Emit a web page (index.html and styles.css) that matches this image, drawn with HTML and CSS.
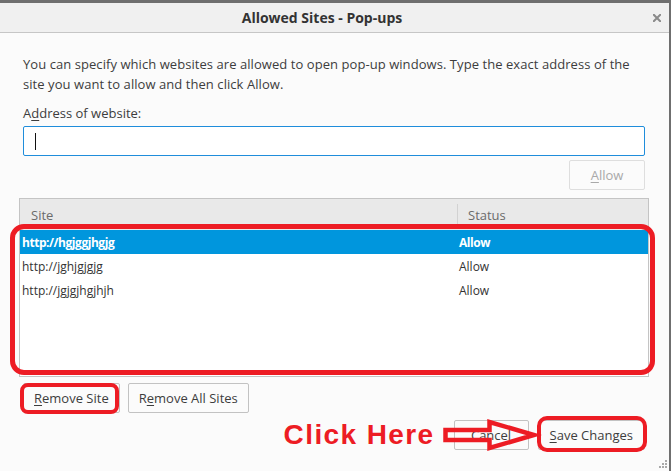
FILE: index.html
```html
<!DOCTYPE html>
<html lang="en">
<head>
<meta charset="utf-8">
<title>Allowed Sites - Pop-ups</title>
<link rel="stylesheet" href="styles.css">
</head>
<body>
<div class="window">
  <div class="titlebar">
    <div class="title">Allowed Sites - Pop-ups</div>
    <svg class="close" width="8" height="8" viewBox="0 0 8 8"><path d="M0.8 0.8 L7.2 7.2 M7.2 0.8 L0.8 7.2" stroke="#8a8a8a" stroke-width="2" stroke-linecap="square"/></svg>
  </div>
  <div class="content">
    <p class="intro">You can specify which websites are allowed to open pop-up windows. Type the exact address of the<br>site you want to allow and then click Allow.</p>
    <label class="label">A<u>d</u>dress of website:</label>
    <div class="input"><span class="caret"></span></div>
    <div class="allow-row"><button class="btn btn-disabled btn-allow"><u>A</u>llow</button></div>
    <div class="list">
      <div class="list-head">
        <div class="head-site">Site</div>
        <div class="head-status">Status</div>
      </div>
      <div class="list-body ring ring-list">
        <div class="row selected"><span class="cell">http://hgjggjhgjg</span><span class="cell">Allow</span></div>
        <div class="row"><span class="cell">http://jghjgjgjg</span><span class="cell">Allow</span></div>
        <div class="row"><span class="cell">http://jgjgjhgjhjh</span><span class="cell">Allow</span></div>
      </div>
    </div>
    <div class="actions">
      <button class="btn btn-remove ring ring-remove"><u>R</u>emove Site</button>
      <button class="btn">R<u>e</u>move All Sites</button>
    </div>
    <div class="footer">
      <span class="click-here">Click Here</span>
      <button class="btn btn-cancel">Cancel</button>
      <button class="btn btn-save ring ring-save"><u>S</u>ave Changes</button>
    </div>
  </div>
  <svg class="arrow" width="102" height="36" viewBox="0 0 102 36"><polygon points="5.5,13 49.5,13 49.5,5 94,18 49.5,31 49.5,23 5.5,23" fill="none" stroke="#ed1c24" stroke-width="4.5" stroke-linejoin="miter"/></svg>
  <svg class="grip" width="8" height="8" viewBox="0 0 8 8"><g fill="#a9a9a9"><rect x="6" y="0" width="2" height="2"/><rect x="3" y="3" width="2" height="2"/><rect x="6" y="3" width="2" height="2"/><rect x="0" y="6" width="2" height="2"/><rect x="3" y="6" width="2" height="2"/><rect x="6" y="6" width="2" height="2"/></g></svg>
</div>
</body>
</html>
```

FILE: styles.css
```css
* { box-sizing: border-box; }
html, body { margin: 0; padding: 0; }
body {
  width: 671px;
  height: 471px;
  overflow: hidden;
  background: #fbfbfb;
  font-family: "Open Sans", "Noto Sans", "DejaVu Sans", sans-serif;
  font-size: 13px;
  color: #3d3d3d;
}
.window {
  position: relative;
  width: 671px;
  height: 471px;
  border-top: 3px solid #6f6f6f;
  border-right: 2px solid #6f6f6f;
  background: #fbfbfb;
  overflow: hidden;
}
.titlebar {
  display: flex;
  align-items: center;
  height: 30px;
  background: #f0f0f0;
  border-bottom: 1px solid #c6c6c6;
}
.title {
  flex: 1;
  text-align: center;
  padding-right: 9px;
  font-weight: 700;
  font-size: 14px;
  color: #333;
  line-height: 29px;
}
.close { margin-right: 8px; display: block; }
.content { padding: 0 24px 0 23px; }
.intro { margin: 21px 0 0; line-height: 20px; letter-spacing: 0.06px; }
.label { display: block; margin-top: 9px; line-height: 20px; }
u { text-decoration: underline; text-underline-offset: 2px; }
.input {
  margin-top: 3px;
  height: 30px;
  border: 1px solid #1f8ddb;
  border-radius: 2px;
  background: #fff;
  display: flex;
  align-items: center;
  padding-left: 11px;
}
.caret { width: 1px; height: 17px; background: #111; }
.allow-row { display: flex; justify-content: flex-end; margin-top: 4px; }
.btn {
  height: 30px;
  padding: 0 10px;
  font-family: inherit;
  font-size: 13px;
  color: #3d3d3d;
  background: #fbfbfb;
  border: 1px solid #c2c2c2;
  border-radius: 2px;
}
.btn-allow { width: 76px; }
.btn-disabled { color: #a9a9a9; border-color: #dedede; }
.list {
  margin: 8px -4px 0;
  height: 179px;
  border: 1px solid #c4c4c4;
  background: #fff;
  display: flex;
  flex-direction: column;
}
.list-head {
  display: grid;
  grid-template-columns: 437px 1fr;
  height: 31px;
  background: #e9e9e9;
  color: #6b6b6b;
  font-size: 13px;
}
.head-site { display: flex; align-items: center; padding-left: 11px; }
.head-status {
  display: flex;
  align-items: center;
  align-self: center;
  height: 22px;
  padding-left: 10px;
  border-left: 1px solid #d2d2d2;
}
.list-body { flex: 1; }
.row {
  display: grid;
  grid-template-columns: 437px 1fr;
  height: 24px;
  align-items: center;
  padding-left: 2px;
  font-size: 12px;
  color: #333;
}
.row.selected { background: #0096dd; color: #fff; font-weight: 700; letter-spacing: -0.45px; }
.actions { display: flex; gap: 8px; margin-top: 6px; }
.footer {
  display: flex;
  justify-content: flex-end;
  align-items: center;
  margin-top: 7px;
}
.click-here {
  font-family: "Liberation Sans", Arial, sans-serif;
  font-weight: 700;
  font-size: 28px;
  letter-spacing: 1.4px;
  color: #ed1c24;
  margin-right: 19px;
  line-height: 30px;
}
.btn-cancel { min-width: 75px; margin-right: 9px; }
.btn-save { padding: 0 11px; }
.ring { position: relative; }
.ring::after {
  content: "";
  position: absolute;
  border: 4px solid #ed1c24;
  pointer-events: none;
}
.ring-list::after { top: -6px; left: -10px; right: -7px; bottom: 1px; border-width: 5px; border-radius: 14px; }
.ring-remove::after { top: -1px; left: -4px; right: 0; bottom: -2px; border-radius: 8px; }
.ring-save::after { top: -5px; left: -2px; right: -3px; bottom: -3px; border-radius: 10px; }
.arrow { position: absolute; left: 440px; top: 414px; }
.grip { position: absolute; right: 2px; bottom: 3px; }
```
